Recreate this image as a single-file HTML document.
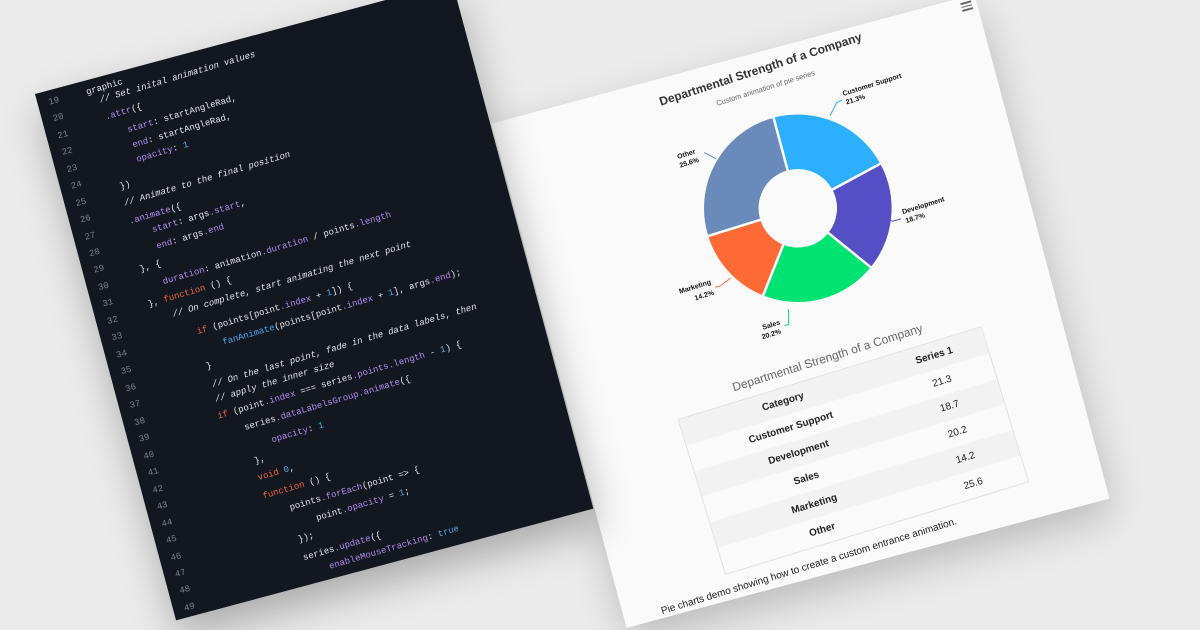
<!DOCTYPE html>
<html><head><meta charset="utf-8"><style>
html,body{margin:0;padding:0;width:1200px;height:630px;overflow:hidden}
body{background:#ebebeb;position:relative;font-family:"Liberation Sans",sans-serif}
.stage{position:absolute;transform-origin:0 0;transform:rotate(-15deg)}
#code{left:35px;top:94px;width:432px;height:545px;background:#131720;overflow:hidden;box-shadow:0 18px 40px rgba(0,0,0,.28);z-index:3}
#code div{position:absolute;height:12px;line-height:12px;white-space:pre;font-family:"Liberation Mono",monospace;font-size:9px;color:#e3e6ea;transform:rotate(-1.5deg);transform-origin:0 50%}
#code .n{color:#7b808b;transform:none;width:14px}
.c{color:#868b95;font-style:italic}.p{color:#b48cf2}.k{color:#f2683f}.b{color:#4ea8ee}
#chart{left:323px;top:175px;width:10px;height:10px;z-index:1}
.card{position:absolute;left:176px;top:-6px;width:500px;height:522px;background:#fafafa;box-shadow:0 16px 40px rgba(0,0,0,.2)}
#chart .t{position:absolute;white-space:nowrap;transform-origin:50% 50%}
.lb{font-size:7px;font-weight:bold;color:#111;line-height:9px;height:9px;transform:rotate(-2.5deg)}
table{border-collapse:collapse;font-size:10px;color:#222}
td,th{height:26.8px;padding:0;text-align:center}
</style></head><body>
<div id="code" class="stage">
<div class="n" style="left:11px;top:6px">19</div>
<div class="n" style="left:11px;top:23px">20</div>
<div class="n" style="left:11px;top:41px">21</div>
<div class="n" style="left:11px;top:58px">22</div>
<div class="n" style="left:11px;top:76px">23</div>
<div class="n" style="left:11px;top:93px">24</div>
<div class="n" style="left:11px;top:111px">25</div>
<div class="n" style="left:11px;top:128px">26</div>
<div class="n" style="left:11px;top:146px">27</div>
<div class="n" style="left:11px;top:163px">28</div>
<div class="n" style="left:11px;top:180px">29</div>
<div class="n" style="left:11px;top:198px">30</div>
<div class="n" style="left:11px;top:215px">31</div>
<div class="n" style="left:11px;top:233px">32</div>
<div class="n" style="left:11px;top:250px">33</div>
<div class="n" style="left:11px;top:268px">34</div>
<div class="n" style="left:11px;top:285px">35</div>
<div class="n" style="left:11px;top:303px">36</div>
<div class="n" style="left:11px;top:320px">37</div>
<div class="n" style="left:11px;top:338px">38</div>
<div class="n" style="left:11px;top:355px">39</div>
<div class="n" style="left:11px;top:373px">40</div>
<div class="n" style="left:11px;top:390px">41</div>
<div class="n" style="left:11px;top:408px">42</div>
<div class="n" style="left:11px;top:425px">43</div>
<div class="n" style="left:11px;top:443px">44</div>
<div class="n" style="left:11px;top:460px">45</div>
<div class="n" style="left:11px;top:478px">46</div>
<div class="n" style="left:11px;top:495px">47</div>
<div class="n" style="left:11px;top:512px">48</div>
<div class="n" style="left:11px;top:530px">49</div>

<div style="left:50px;top:6px">graphic</div>
<div style="left:61px;top:17px" class="c">// Set inital animation values</div>
<div style="left:62px;top:35px"><span class="p">.attr</span>({</div>
<div style="left:80px;top:53px"><span class="p">start</span>: startAngleRad,</div>
<div style="left:81px;top:69px"><span class="p">end</span>: startAngleRad,</div>
<div style="left:81px;top:84px"><span class="p">opacity</span>: <span class="b">1</span></div>
<div style="left:58px;top:106px">})</div>
<div style="left:58px;top:123px" class="c">// Animate to the final position</div>
<div style="left:58px;top:142px"><span class="p">.animate</span>({</div>
<div style="left:78px;top:156px"><span class="p">start</span>: args<span class="p">.start</span>,</div>
<div style="left:78px;top:173px"><span class="p">end</span>: args<span class="p">.end</span></div>
<div style="left:56px;top:191px">}, {</div>
<div style="left:75px;top:209px"><span class="p">duration</span>: animation<span class="p">.duration</span> / points<span class="p">.length</span></div>
<div style="left:55px;top:227px">}, <span class="k">function</span> () {</div>
<div style="left:76px;top:243px" class="c">// On complete, start animating the next point</div>
<div style="left:95px;top:266px"><span class="k">if</span> (points[point<span class="p">.index</span> + <span class="b">1</span>]) {</div>
<div style="left:117px;top:283px"><span class="b">fanAnimate</span>(points[point<span class="p">.index</span> + <span class="b">1</span>], args<span class="p">.end</span>);</div>
<div style="left:95px;top:302px">}</div>
<div style="left:96px;top:321px" class="c">// On the last point, fade in the data labels, then</div>
<div style="left:95px;top:336px" class="c">// apply the inner size</div>
<div style="left:93px;top:353px"><span class="k">if</span> (point<span class="p">.index</span> === series<span class="p">.points.length</span> - <span class="b">1</span>) {</div>
<div style="left:116px;top:371px">series<span class="p">.dataLabelsGroup.animate</span>({</div>
<div style="left:139px;top:390px"><span class="p">opacity</span>: <span class="b">1</span></div>
<div style="left:117px;top:406px">},</div>
<div style="left:116px;top:423px"><span class="k">void</span> <span class="b">0</span>,</div>
<div style="left:116px;top:442px"><span class="k">function</span> () {</div>
<div style="left:139px;top:460px">points<span class="p">.forEach</span>(point =&gt; {</div>
<div style="left:162px;top:477px">point<span class="p">.opacity</span> = <span class="b">1</span>;</div>
<div style="left:139px;top:493px">});</div>
<div style="left:139px;top:512px">series<span class="p">.update</span>({</div>
<div style="left:162px;top:527px"><span class="p">enableMouseTracking</span>: <span class="b">true</span></div>
</div>

<div id="chart" class="stage">
<div class="card"></div>
<div style="position:absolute;left:660px;top:-1px;width:11px;height:1.6px;background:#666"></div>
<div style="position:absolute;left:660px;top:2.5px;width:11px;height:1.6px;background:#666"></div>
<div style="position:absolute;left:660px;top:6px;width:11px;height:1.6px;background:#666"></div>

<div class="t" style="left:300px;top:2px;width:300px;text-align:center;font-size:12px;font-weight:bold;color:#333;line-height:18px;transform:rotate(-3deg)">Departmental Strength of a Company</div>
<div class="t" style="left:350px;top:25px;width:200px;text-align:center;font-size:7.5px;color:#666;line-height:11px;transform:rotate(-2.5deg)">Custom animation of pie series</div>

<svg style="position:absolute;left:0;top:0;overflow:visible" width="700" height="540">
<g transform="translate(450,155)" stroke="#fafafa" stroke-width="2.5" stroke-linejoin="round">
<path fill="#2caffe" d="M0,-95 A95,95 0 0 1 92.44,-21.89 L36.98,-8.76 A38,38 0 0 0 0,-38 Z"/>
<path fill="#544fc5" d="M92.44,-21.89 A95,95 0 0 1 55.84,76.86 L22.34,30.74 A38,38 0 0 0 36.98,-8.76 Z"/>
<path fill="#00e272" d="M55.84,76.86 A95,95 0 0 1 -56.8,76.15 L-22.72,30.46 A38,38 0 0 0 22.34,30.74 Z"/>
<path fill="#fe6a35" d="M-56.8,76.15 A95,95 0 0 1 -94.93,3.58 L-37.97,1.43 A38,38 0 0 0 -22.72,30.46 Z"/>
<path fill="#6b8abc" d="M-94.93,3.58 A95,95 0 0 1 0,-95 L0,-38 A38,38 0 0 0 -37.97,1.43 Z"/>
</g>
<g fill="none" stroke-width="1">
<polyline stroke="#2caffe" points="505,74 515,63 521,62"/>
<polyline stroke="#544fc5" points="531,186 538,192 547,192"/>
<polyline stroke="#00e272" points="415,250 411,265 407,265"/>
<polyline stroke="#fe6a35" points="367,205 355,210 350,210"/>
<polyline stroke="#6b8abc" points="374,77 384,86"/>
</g>
</svg>

<div class="t lb" style="left:523px;top:51px">Customer Support</div>
<div class="t lb" style="left:524px;top:61px">21.3%</div>
<div class="t lb" style="left:550px;top:181px">Development</div>
<div class="t lb" style="left:551px;top:191px">18.7%</div>
<div class="t lb" style="left:385px;top:257px">Sales</div>
<div class="t lb" style="left:382px;top:266px">20.2%</div>
<div class="t lb" style="left:287px;top:201px;width:60px;text-align:right">Marketing</div>
<div class="t lb" style="left:287px;top:212px;width:60px;text-align:right">14.2%</div>
<div class="t lb" style="left:347px;top:70px">Other</div>
<div class="t lb" style="left:347px;top:79px">25.6%</div>

<div class="t" style="left:290px;top:299px;width:300px;text-align:center;font-size:12px;color:#666;line-height:16px;transform:rotate(-2.5deg)">Departmental Strength of a Company</div>

<div style="position:absolute;left:282px;top:322px;width:316px;transform:rotate(-2deg);transform-origin:50% 50%;border:1px solid #e0e0e0;background:#fafafa">
<table style="width:316px">
<tr style="background:#f2f2f2"><th style="width:210px">Category</th><th>Series 1</th></tr>
<tr><th>Customer Support</th><td>21.3</td></tr>
<tr style="background:#f2f2f2"><th>Development</th><td>18.7</td></tr>
<tr><th>Sales</th><td>20.2</td></tr>
<tr style="background:#f2f2f2"><th>Marketing</th><td>14.2</td></tr>
<tr><th>Other</th><td>25.6</td></tr>
</table>
</div>

<div class="t" style="left:214px;top:503px;font-size:10px;color:#222;line-height:14px;transform:rotate(-2deg);transform-origin:0 50%">Pie charts demo showing how to create a custom entrance animation.</div>
</div>
</body></html>
